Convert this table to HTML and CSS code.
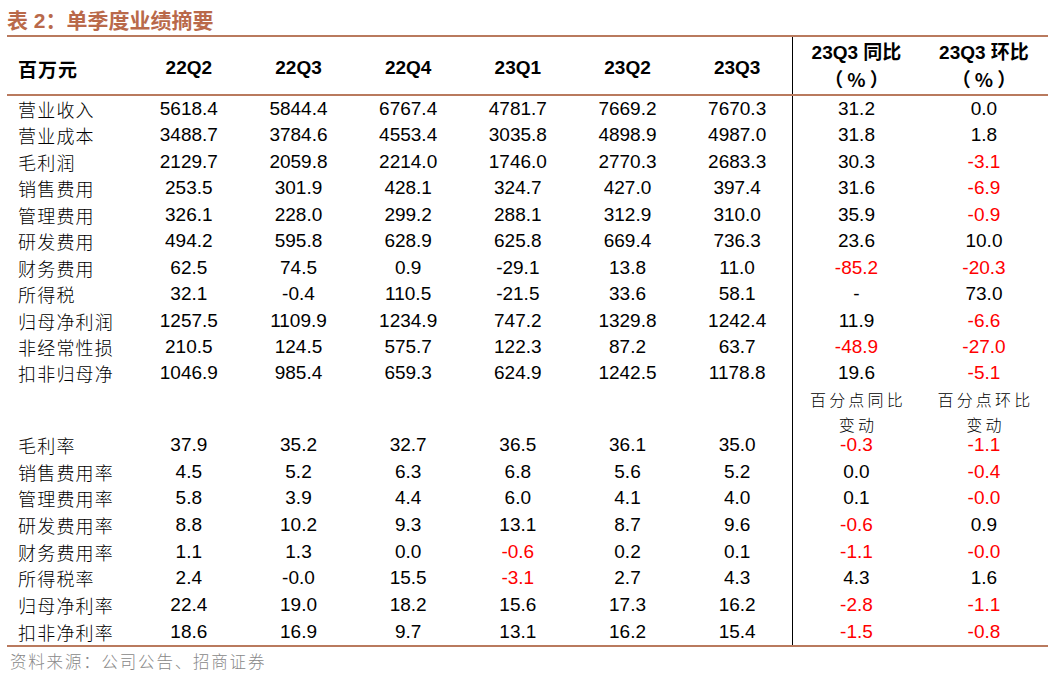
FILE: index.html
```html
<!DOCTYPE html>
<html lang="zh-CN">
<head>
<meta charset="utf-8">
<title>表 2：单季度业绩摘要</title>
<link rel="stylesheet" href="styles.css">
</head>
<body>
<div class="page">
  <h1 class="title">表 2：<span class="title-cn">单季度业绩摘要</span></h1>
  <div class="tbl">
    <div class="row head">
      <div class="hc lab">百万元</div>
      <div class="hc">22Q2</div>
      <div class="hc">22Q3</div>
      <div class="hc">22Q4</div>
      <div class="hc">23Q1</div>
      <div class="hc">23Q2</div>
      <div class="hc">23Q3</div>
      <div class="hc two sep"><span>23Q3 同比</span><span class="pct">（%）</span></div>
      <div class="hc two"><span>23Q3 环比</span><span class="pct">（%）</span></div>
    </div>

    <div class="row"><span class="lab">营业收入</span><span class="c">5618.4</span><span class="c">5844.4</span><span class="c">6767.4</span><span class="c">4781.7</span><span class="c">7669.2</span><span class="c">7670.3</span><span class="c sep">31.2</span><span class="c">0.0</span></div>
    <div class="row"><span class="lab">营业成本</span><span class="c">3488.7</span><span class="c">3784.6</span><span class="c">4553.4</span><span class="c">3035.8</span><span class="c">4898.9</span><span class="c">4987.0</span><span class="c sep">31.8</span><span class="c">1.8</span></div>
    <div class="row"><span class="lab">毛利润</span><span class="c">2129.7</span><span class="c">2059.8</span><span class="c">2214.0</span><span class="c">1746.0</span><span class="c">2770.3</span><span class="c">2683.3</span><span class="c sep">30.3</span><span class="c neg">-3.1</span></div>
    <div class="row"><span class="lab">销售费用</span><span class="c">253.5</span><span class="c">301.9</span><span class="c">428.1</span><span class="c">324.7</span><span class="c">427.0</span><span class="c">397.4</span><span class="c sep">31.6</span><span class="c neg">-6.9</span></div>
    <div class="row"><span class="lab">管理费用</span><span class="c">326.1</span><span class="c">228.0</span><span class="c">299.2</span><span class="c">288.1</span><span class="c">312.9</span><span class="c">310.0</span><span class="c sep">35.9</span><span class="c neg">-0.9</span></div>
    <div class="row"><span class="lab">研发费用</span><span class="c">494.2</span><span class="c">595.8</span><span class="c">628.9</span><span class="c">625.8</span><span class="c">669.4</span><span class="c">736.3</span><span class="c sep">23.6</span><span class="c">10.0</span></div>
    <div class="row"><span class="lab">财务费用</span><span class="c">62.5</span><span class="c">74.5</span><span class="c">0.9</span><span class="c">-29.1</span><span class="c">13.8</span><span class="c">11.0</span><span class="c sep neg">-85.2</span><span class="c neg">-20.3</span></div>
    <div class="row"><span class="lab">所得税</span><span class="c">32.1</span><span class="c">-0.4</span><span class="c">110.5</span><span class="c">-21.5</span><span class="c">33.6</span><span class="c">58.1</span><span class="c sep">-</span><span class="c">73.0</span></div>
    <div class="row"><span class="lab">归母净利润</span><span class="c">1257.5</span><span class="c">1109.9</span><span class="c">1234.9</span><span class="c">747.2</span><span class="c">1329.8</span><span class="c">1242.4</span><span class="c sep">11.9</span><span class="c neg">-6.6</span></div>
    <div class="row"><span class="lab">非经常性损</span><span class="c">210.5</span><span class="c">124.5</span><span class="c">575.7</span><span class="c">122.3</span><span class="c">87.2</span><span class="c">63.7</span><span class="c sep neg">-48.9</span><span class="c neg">-27.0</span></div>
    <div class="row"><span class="lab">扣非归母净</span><span class="c">1046.9</span><span class="c">985.4</span><span class="c">659.3</span><span class="c">624.9</span><span class="c">1242.5</span><span class="c">1178.8</span><span class="c sep">19.6</span><span class="c neg">-5.1</span></div>

    <div class="row note"><span class="lab"></span><span class="c"></span><span class="c"></span><span class="c"></span><span class="c"></span><span class="c"></span><span class="c"></span><span class="ncell sep"><span class="nl">百分点同比</span><span class="nl">变动</span></span><span class="ncell"><span class="nl">百分点环比</span><span class="nl">变动</span></span></div>

    <div class="row lo"><span class="lab">毛利率</span><span class="c">37.9</span><span class="c">35.2</span><span class="c">32.7</span><span class="c">36.5</span><span class="c">36.1</span><span class="c">35.0</span><span class="c sep neg">-0.3</span><span class="c neg">-1.1</span></div>
    <div class="row lo"><span class="lab">销售费用率</span><span class="c">4.5</span><span class="c">5.2</span><span class="c">6.3</span><span class="c">6.8</span><span class="c">5.6</span><span class="c">5.2</span><span class="c sep">0.0</span><span class="c neg">-0.4</span></div>
    <div class="row lo"><span class="lab">管理费用率</span><span class="c">5.8</span><span class="c">3.9</span><span class="c">4.4</span><span class="c">6.0</span><span class="c">4.1</span><span class="c">4.0</span><span class="c sep">0.1</span><span class="c neg">-0.0</span></div>
    <div class="row lo"><span class="lab">研发费用率</span><span class="c">8.8</span><span class="c">10.2</span><span class="c">9.3</span><span class="c">13.1</span><span class="c">8.7</span><span class="c">9.6</span><span class="c sep neg">-0.6</span><span class="c">0.9</span></div>
    <div class="row lo"><span class="lab">财务费用率</span><span class="c">1.1</span><span class="c">1.3</span><span class="c">0.0</span><span class="c neg">-0.6</span><span class="c">0.2</span><span class="c">0.1</span><span class="c sep neg">-1.1</span><span class="c neg">-0.0</span></div>
    <div class="row lo"><span class="lab">所得税率</span><span class="c">2.4</span><span class="c">-0.0</span><span class="c">15.5</span><span class="c neg">-3.1</span><span class="c">2.7</span><span class="c">4.3</span><span class="c sep">4.3</span><span class="c">1.6</span></div>
    <div class="row lo"><span class="lab">归母净利率</span><span class="c">22.4</span><span class="c">19.0</span><span class="c">18.2</span><span class="c">15.6</span><span class="c">17.3</span><span class="c">16.2</span><span class="c sep neg">-2.8</span><span class="c neg">-1.1</span></div>
    <div class="row lo"><span class="lab">扣非净利率</span><span class="c">18.6</span><span class="c">16.9</span><span class="c">9.7</span><span class="c">13.1</span><span class="c">16.2</span><span class="c">15.4</span><span class="c sep neg">-1.5</span><span class="c neg">-0.8</span></div>
  </div>
  <p class="src">资料来源：公司公告、招商证券</p>
</div>
</body>
</html>
```

FILE: styles.css
```css
html, body {
  margin: 0;
  padding: 0;
  background: #ffffff;
}

body {
  font-family: "Liberation Sans", "Noto Sans CJK SC", sans-serif;
  color: #000000;
}

.page {
  width: 1041px;
  padding-left: 7px;
}

.title {
  margin: 0;
  padding-top: 7px;
  height: 28px;
  line-height: 28px;
  font-size: 21px;
  font-weight: 700;
  color: #b9694a;
  white-space: nowrap;
}

.title-cn {
  letter-spacing: 0;
}

.tbl {
  border-top: 2px solid #b97a5e;
  border-bottom: 2px solid #b97a5e;
}

.row {
  display: grid;
  grid-template-columns: 127px repeat(6, 1fr) 128px 128px;
  height: 26.45px;
  line-height: 26.45px;
}

.row.lo {
  height: 26.65px;
  line-height: 26.65px;
}

.row.head {
  height: 57px;
  line-height: normal;
  border-bottom: 2px solid #b97a5e;
}

.row.note {
  height: 45.4px;
  line-height: 20px;
}

.c {
  font-size: 19px;
  text-align: center;
  white-space: nowrap;
}

.lab {
  padding-left: 11px;
  text-align: left;
  font-family: "Noto Sans CJK SC", sans-serif;
  font-size: 18px;
  font-weight: 300;
  letter-spacing: 1.2px;
  white-space: nowrap;
}

.sep {
  border-left: 1px solid #000000;
}

.neg {
  color: #ff0000;
}

.hc {
  display: flex;
  align-items: center;
  justify-content: center;
  padding-top: 5px;
  font-size: 19px;
  font-weight: 700;
  white-space: nowrap;
}

.hc.lab {
  justify-content: flex-start;
  font-weight: 700;
  letter-spacing: 1px;
}

.hc.two {
  flex-direction: column;
  padding-top: 0;
  line-height: 25.5px;
}

.pct {
  font-family: "Noto Sans CJK SC", sans-serif;
  letter-spacing: 4px;
  padding-left: 4px;
  text-spacing-trim: space-all;
}

.ncell {
  display: flex;
  flex-direction: column;
  align-items: center;
  padding-top: 4px;
  font-family: "Liberation Sans", "Noto Sans CJK SC", sans-serif;
  font-size: 16px;
  font-weight: 300;
  letter-spacing: 3.2px;
  white-space: nowrap;
}

.nl {
  display: block;
  height: 20px;
  padding-left: 3px;
}

.nl + .nl {
  margin-top: 5px;
}

.src {
  margin: 4px 0 0 0;
  padding-left: 3px;
  line-height: 20px;
  font-family: "Noto Sans CJK SC", sans-serif;
  font-size: 16.5px;
  font-weight: 300;
  letter-spacing: 1.8px;
  color: #888888;
}
```
